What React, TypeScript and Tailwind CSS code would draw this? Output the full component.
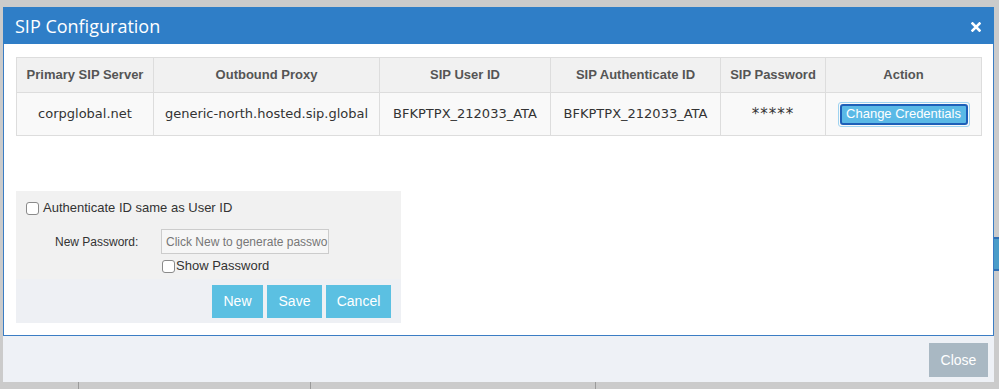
import React from 'react'

const cols = [
  { label: 'Primary SIP Server', w: 'w-[137px]' },
  { label: 'Outbound Proxy', w: 'w-[226px]' },
  { label: 'SIP User ID', w: 'w-[171px]' },
  { label: 'SIP Authenticate ID', w: 'w-[170px]' },
  { label: 'SIP Password', w: 'w-[105px]' },
  { label: 'Action', w: 'w-[156px]' },
]

const row = ['corpglobal.net', 'generic-north.hosted.sip.global', 'BFKPTPX_212033_ATA', 'BFKPTPX_212033_ATA']

function Checkbox() {
  return <span className="inline-block w-[13px] h-[13px] rounded-[3px] border border-[#8a8a8a] bg-white shrink-0" />
}

export default function App() {
  return (
    <div className="relative w-[999px] h-[389px] bg-[#cbcbcb] overflow-hidden font-['Liberation_Sans',Arial,sans-serif]">
      {/* page peeking out behind the modal */}
      <div className="absolute right-0 top-[237px] w-[5px] h-[34px] bg-[#4a9cc9] border-y-2 border-[#2f6fb5]" />
      <div className="absolute left-[78px] bottom-0 w-px h-[7px] bg-[#9a9a9a]" />
      <div className="absolute left-[310px] bottom-0 w-px h-[7px] bg-[#9a9a9a]" />
      <div className="absolute left-[595px] bottom-0 w-px h-[7px] bg-[#9a9a9a]" />

      {/* modal */}
      <div className="absolute left-[3px] top-[7px] w-[991px] h-[375px] flex flex-col">
        <div className="h-[37px] bg-[#2f7ec7] flex items-center justify-between pl-[12px] pr-[13px]">
          <span className="text-white text-[18px] font-['Open_Sans',sans-serif] leading-none pt-[1px]">SIP Configuration</span>
          <svg width="10" height="10" viewBox="0 0 10 10" className="mt-[2px]">
            <path d="M1.5 1.5 L8.5 8.5 M8.5 1.5 L1.5 8.5" stroke="white" strokeWidth="2.6" strokeLinecap="square" />
          </svg>
        </div>

        <div className="h-[292px] bg-white border-x border-b border-[#3b7dc4] pl-[12px] pt-[13px]">
          <table className="border-collapse text-center">
            <thead>
              <tr className="bg-[#f1f1f1] h-[35px]">
                {cols.map(c => (
                  <th key={c.label} className={`${c.w} border border-[#dddddd] text-[13px] font-bold text-[#555555] p-0`}>
                    {c.label}
                  </th>
                ))}
              </tr>
            </thead>
            <tbody>
              <tr className="bg-[#f9f9f9] h-[43px]">
                {row.map((v, i) => (
                  <td key={i} className="border border-[#dddddd] text-[13px] text-[#333333] font-['DejaVu_Sans',Verdana,sans-serif] p-0">
                    {v}
                  </td>
                ))}
                <td className="border border-[#dddddd] text-[15px] text-[#333333] font-['DejaVu_Sans',Verdana,sans-serif] tracking-[1px] p-0">
                  *****
                </td>
                <td className="border border-[#dddddd] p-0">
                  <span className="inline-flex rounded-[3px] border border-[#9fd3f0] p-px">
                    <span className="inline-flex items-center justify-center w-[128px] h-[21px] rounded-[3px] border-2 border-[#1e5fb8] bg-[#5ab9e6] text-white text-[13px]">
                      Change Credentials
                    </span>
                  </span>
                </td>
              </tr>
            </tbody>
          </table>

          <div className="mt-[55px] w-[385px] bg-[#f1f1f1] text-[13px] text-[#333333]">
            <div className="pt-[7px] pl-[10px] h-[27px] flex items-center gap-[4px]">
              <Checkbox />
              <span>Authenticate ID same as User ID</span>
            </div>
            <div className="mt-[11px] flex items-center">
              <span className="w-[145px] pl-[39px] text-[12px]">New Password:</span>
              <div className="w-[168px] h-[25px] border border-[#cccccc] bg-[#f6f6f6] flex items-center pl-[4px] text-[12px] text-[#777777] overflow-hidden whitespace-nowrap">
                Click New to generate passwo
              </div>
            </div>
            <div className="mt-[5px] pl-[146px] flex items-center gap-[1px] h-[14px] leading-[14px]">
              <Checkbox />
              <span>Show Password</span>
            </div>
            <div className="mt-[6px] bg-[#eef0f4] h-[44px] flex justify-end items-start pt-[6px] pr-[10px] gap-[4px]">
              <span className="w-[51px] h-[33px] bg-[#5bc0e2] text-white text-[14px] flex items-center justify-center">New</span>
              <span className="w-[55px] h-[33px] bg-[#5bc0e2] text-white text-[14px] flex items-center justify-center">Save</span>
              <span className="w-[65px] h-[33px] bg-[#5bc0e2] text-white text-[14px] flex items-center justify-center">Cancel</span>
            </div>
          </div>
        </div>

        <div className="flex-1 bg-[#eef1f6] flex justify-end items-start pt-[7px] pr-[6px]">
          <span className="w-[59px] h-[34px] bg-[#a9b8c3] text-white text-[14px] flex items-center justify-center">Close</span>
        </div>
      </div>
    </div>
  )
}
